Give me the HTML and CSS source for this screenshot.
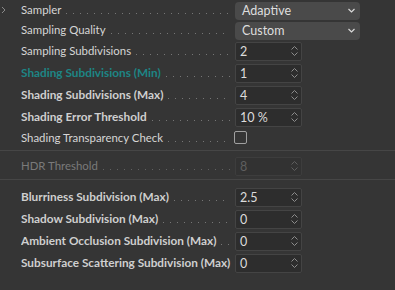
FILE: index.html
```html
<!DOCTYPE html>
<html>
<head>
<meta charset="utf-8">
<link rel="stylesheet" href="styles.css">
</head>
<body>
<div class="panel">
  <div class="row row-sel">
    <span class="gutter"><svg width="5" height="8" viewBox="0 0 5 8"><path d="M1 1 L4 4 L1 7" fill="none" stroke="#8a8a8a" stroke-width="1"/></svg></span>
    <div class="label"><span class="txt">Sampler</span><i class="dots"></i></div>
    <div class="select"><span>Adaptive</span><svg class="caret" width="7" height="5" viewBox="0 0 7 5"><path d="M0.5 1 L3.5 4 L6.5 1" fill="none" stroke="#d8d8d8" stroke-width="1.2"/></svg></div>
  </div>
  <div class="row row-sel">
    <span class="gutter"></span>
    <div class="label"><span class="txt">Sampling Quality</span><i class="dots"></i></div>
    <div class="select"><span>Custom</span><svg class="caret" width="7" height="5" viewBox="0 0 7 5"><path d="M0.5 1 L3.5 4 L6.5 1" fill="none" stroke="#d8d8d8" stroke-width="1.2"/></svg></div>
  </div>
  <div class="row">
    <span class="gutter"></span>
    <div class="label"><span class="txt">Sampling Subdivisions</span><i class="dots"></i></div>
    <div class="num"><span>2</span><svg class="spin" width="7" height="10" viewBox="0 0 7 10"><path d="M0.5 3.5 L3.5 0.5 L6.5 3.5 M0.5 6.5 L3.5 9.5 L6.5 6.5" fill="none" stroke="#8c8c8c" stroke-width="1"/></svg></div>
  </div>
  <div class="row">
    <span class="gutter"></span>
    <div class="label"><span class="txt bold teal">Shading Subdivisions (Min)</span><i class="dots"></i></div>
    <div class="num"><span>1</span><svg class="spin" width="7" height="10" viewBox="0 0 7 10"><path d="M0.5 3.5 L3.5 0.5 L6.5 3.5 M0.5 6.5 L3.5 9.5 L6.5 6.5" fill="none" stroke="#8c8c8c" stroke-width="1"/></svg></div>
  </div>
  <div class="row">
    <span class="gutter"></span>
    <div class="label"><span class="txt bold">Shading Subdivisions (Max)</span><i class="dots"></i></div>
    <div class="num"><span>4</span><svg class="spin" width="7" height="10" viewBox="0 0 7 10"><path d="M0.5 3.5 L3.5 0.5 L6.5 3.5 M0.5 6.5 L3.5 9.5 L6.5 6.5" fill="none" stroke="#8c8c8c" stroke-width="1"/></svg></div>
  </div>
  <div class="row">
    <span class="gutter"></span>
    <div class="label"><span class="txt bold">Shading Error Threshold</span><i class="dots"></i></div>
    <div class="num"><span>10 %</span><svg class="spin" width="7" height="10" viewBox="0 0 7 10"><path d="M0.5 3.5 L3.5 0.5 L6.5 3.5 M0.5 6.5 L3.5 9.5 L6.5 6.5" fill="none" stroke="#8c8c8c" stroke-width="1"/></svg></div>
  </div>
  <div class="row row-check">
    <span class="gutter"></span>
    <div class="label"><span class="txt">Shading Transparency Check</span><i class="dots"></i></div>
    <div class="check"></div>
  </div>
  <div class="section">
    <div class="row">
      <span class="gutter"></span>
      <div class="label"><span class="txt dim">HDR Threshold</span><i class="dots dim-dots"></i></div>
      <div class="num disabled"><span>8</span><svg class="spin" width="7" height="10" viewBox="0 0 7 10"><path d="M0.5 3.5 L3.5 0.5 L6.5 3.5 M0.5 6.5 L3.5 9.5 L6.5 6.5" fill="none" stroke="#5e5e5e" stroke-width="1"/></svg></div>
    </div>
  </div>
  <div class="group">
    <div class="row">
      <span class="gutter"></span>
      <div class="label"><span class="txt bold">Blurriness Subdivision (Max)</span><i class="dots"></i></div>
      <div class="num"><span>2.5</span><svg class="spin" width="7" height="10" viewBox="0 0 7 10"><path d="M0.5 3.5 L3.5 0.5 L6.5 3.5 M0.5 6.5 L3.5 9.5 L6.5 6.5" fill="none" stroke="#8c8c8c" stroke-width="1"/></svg></div>
    </div>
    <div class="row">
      <span class="gutter"></span>
      <div class="label"><span class="txt bold">Shadow Subdivision (Max)</span><i class="dots"></i></div>
      <div class="num"><span>0</span><svg class="spin" width="7" height="10" viewBox="0 0 7 10"><path d="M0.5 3.5 L3.5 0.5 L6.5 3.5 M0.5 6.5 L3.5 9.5 L6.5 6.5" fill="none" stroke="#8c8c8c" stroke-width="1"/></svg></div>
    </div>
    <div class="row">
      <span class="gutter"></span>
      <div class="label"><span class="txt bold">Ambient Occlusion Subdivision (Max)</span><i class="dots"></i></div>
      <div class="num"><span>0</span><svg class="spin" width="7" height="10" viewBox="0 0 7 10"><path d="M0.5 3.5 L3.5 0.5 L6.5 3.5 M0.5 6.5 L3.5 9.5 L6.5 6.5" fill="none" stroke="#8c8c8c" stroke-width="1"/></svg></div>
    </div>
    <div class="row">
      <span class="gutter"></span>
      <div class="label"><span class="txt bold">Subsurface Scattering Subdivision (Max)</span><i class="dots"></i></div>
      <div class="num"><span>0</span><svg class="spin" width="7" height="10" viewBox="0 0 7 10"><path d="M0.5 3.5 L3.5 0.5 L6.5 3.5 M0.5 6.5 L3.5 9.5 L6.5 6.5" fill="none" stroke="#8c8c8c" stroke-width="1"/></svg></div>
    </div>
  </div>
</div>
</body>
</html>
```
FILE: styles.css
```css
html, body {
  margin: 0;
  padding: 0;
  background: #353535;
}
body {
  width: 395px;
  height: 290px;
  overflow: hidden;
  font-family: Lato, "Open Sans", sans-serif;
  font-size: 11.4px;
  color: #d2d2d2;
}
.panel {
  display: flex;
  flex-direction: column;
}
.row {
  display: grid;
  grid-template-columns: 17px 210px 1fr;
  column-gap: 4px;
  height: 22px;
  align-items: center;
}
.row-sel {
  height: 20px;
}
.gutter {
  display: flex;
  align-items: center;
  justify-content: flex-start;
  padding-left: 1px;
}
.label {
  display: flex;
  align-items: baseline;
  min-width: 0;
  white-space: nowrap;
  overflow: hidden;
}
.txt {
  color: #d6d6d6;
  line-height: 16px;
}
.bold {
  font-weight: 700;
  font-size: 11.8px;
  color: #cfcfcf;
}
.teal {
  color: #1d8585;
}
.dim {
  color: #7a7a7a;
}
.dots {
  flex: 1;
  height: 1px;
  margin-left: 5px;
  margin-right: 1px;
  margin-bottom: 1px;
  background-image: linear-gradient(to right, #767676 1px, transparent 1px);
  background-size: 7px 1px;
  background-repeat: repeat-x;
  background-position: left center;
}
.dim-dots {
  background-image: linear-gradient(to right, #626262 1px, transparent 1px);
}
.select {
  width: 125px;
  height: 18px;
  box-sizing: border-box;
  background: #4a4a4a;
  border-radius: 4px;
  display: flex;
  align-items: center;
  justify-content: space-between;
  padding: 0 5px 0 7px;
  font-size: 12.5px;
  color: #dedede;
  margin-top: 1px;
}
.num {
  width: 67px;
  height: 19px;
  box-sizing: border-box;
  background: #2d2d2d;
  border: 1px solid #444;
  border-radius: 2px;
  display: flex;
  align-items: center;
  justify-content: space-between;
  padding: 0 3px 0 4px;
  font-size: 12.5px;
  color: #dcdcdc;
}
.num.disabled {
  background: #323232;
  border-color: #3d3d3d;
  color: #5f5f5f;
}
.row-check {
  align-items: start;
  padding-top: 2px;
  height: 20px;
}
.check {
  width: 13px;
  height: 13px;
  box-sizing: border-box;
  border: 1px solid #a0a0a0;
  border-radius: 2px;
  margin-top: 1px;
  margin-left: -1px;
}
.section {
  border-top: 1px solid #464646;
  border-bottom: 1px solid #464646;
  padding: 4px 0 2px;
  margin-bottom: 6px;
}
```
